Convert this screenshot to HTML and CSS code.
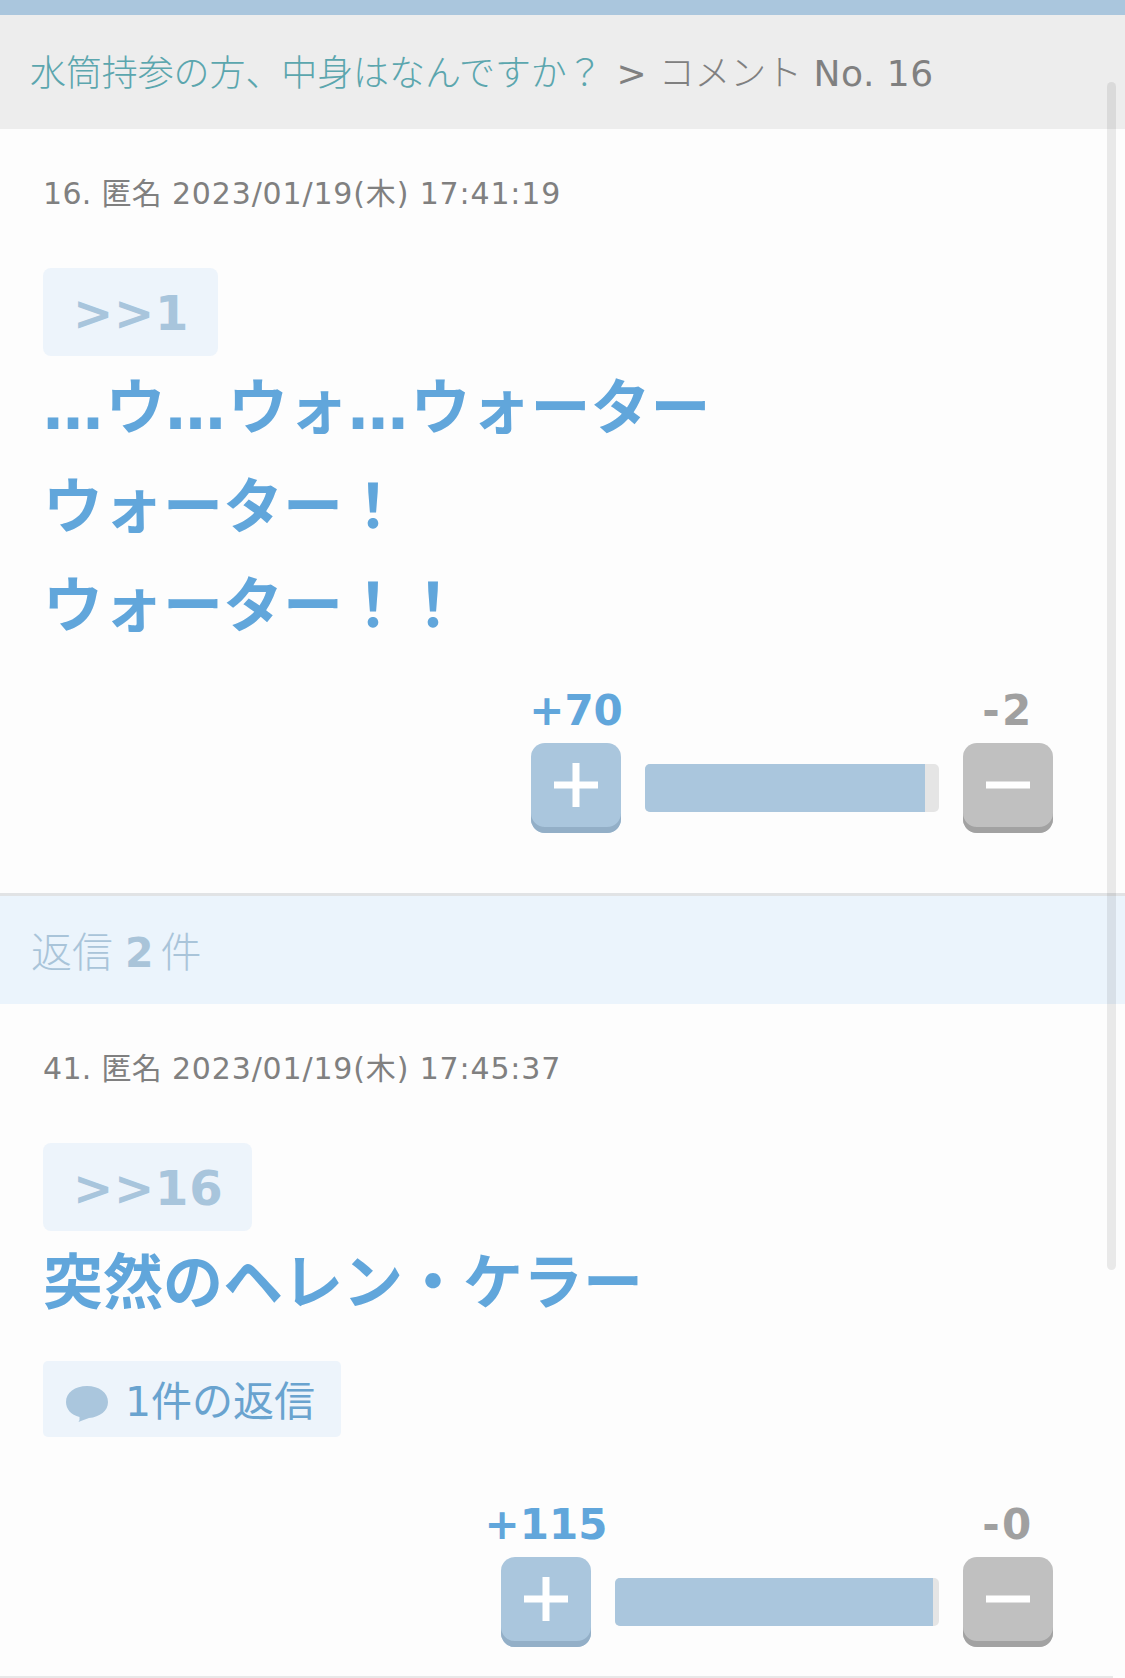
FILE: index.html
```html
<!DOCTYPE html>
<html lang="ja">
<head>
    <meta charset="UTF-8">
    <meta name="viewport" content="width=device-width, initial-scale=1.0">
    <title>水筒持参の方、中身はなんですか？</title>
    <link rel="stylesheet" href="styles.css">
</head>
<body>
    <div class="top-bar"></div>

    <nav class="breadcrumb">
        <a href="#">水筒持参の方、中身はなんですか？</a><span class="arrow">&gt;</span><span class="page">コメント</span><span class="number">No. 16</span>
    </nav>

    <main>
        <article class="comment">
            <p class="meta">16. 匿名 <span class="date">2023/01/19(木) 17:41:19</span></p>
            <a href="#" class="anchor">&gt;&gt;1</a>
            <p class="body"><span class="dots">…</span>ウ<span class="dots">…</span>ウォ<span class="dots">…</span>ウォーター<br>ウォーター！<br>ウォーター！！</p>
            <div class="votes">
                <div class="vote plus">
                    <span class="count">+70</span>
                    <button class="vote-button" aria-label="プラス">
                        <svg viewBox="0 0 44 44"><path d="M0 22H44M22 0V44"/></svg>
                    </button>
                </div>
                <div class="rate rate-short"><div class="rate-fill" style="width: 95.4%"></div></div>
                <div class="vote minus">
                    <span class="count">-2</span>
                    <button class="vote-button" aria-label="マイナス">
                        <svg viewBox="0 0 44 44"><path d="M0 22H44"/></svg>
                    </button>
                </div>
            </div>
        </article>

        <h2 class="reply-header">返信<b>2</b>件</h2>

        <article class="comment reply">
            <p class="meta">41. 匿名 <span class="date">2023/01/19(木) 17:45:37</span></p>
            <a href="#" class="anchor">&gt;&gt;16</a>
            <p class="body">突然のヘレン・ケラー</p>
            <a href="#" class="reply-link">
                <svg viewBox="0 0 42 36"><path d="M21 0C33 0 42 6.500 42 16C42 25 34 31 23 32C19.500 33 15.500 35 12.500 36Q14 33.500 13.500 31C5 29 0 23 0 16C0 6.500 9 0 21 0Z"/></svg>
                <span>1件の返信</span>
            </a>
            <div class="votes">
                <div class="vote plus">
                    <span class="count">+115</span>
                    <button class="vote-button" aria-label="プラス">
                        <svg viewBox="0 0 44 44"><path d="M0 22H44M22 0V44"/></svg>
                    </button>
                </div>
                <div class="rate rate-long"><div class="rate-fill" style="width: 98.3%"></div></div>
                <div class="vote minus">
                    <span class="count">-0</span>
                    <button class="vote-button" aria-label="マイナス">
                        <svg viewBox="0 0 44 44"><path d="M0 22H44"/></svg>
                    </button>
                </div>
            </div>
        </article>
        <hr class="divider">
    </main>

    <div class="scrollbar"></div>
</body>
</html>
```
FILE: styles.css
```css
* {
    margin: 0;
    padding: 0;
    box-sizing: border-box;
}

body {
    height: 1678px;
    position: relative;
    overflow: hidden;
    background-color: #fdfdfd;
    color: #808080;
    font-family: "DejaVu Sans", "Noto Sans CJK JP", sans-serif;
}

a {
    text-decoration: none;
}

.top-bar {
    height: 15px;
    background-color: #aac6dd;
}

/* Breadcrumb */
.breadcrumb {
    display: flex;
    align-items: baseline;
    height: 114px;
    padding: 34px 30px 0;
    background-color: #ededed;
    font-size: 36px;
    line-height: 50px;
    white-space: nowrap;
}

.breadcrumb a {
    color: #5ba6ae;
    font-weight: 300;
    letter-spacing: -0.1px;
}

.breadcrumb .arrow {
    margin: 0 12px 0 14px;
}

.breadcrumb .page {
    font-weight: 300;
    letter-spacing: -0.3px;
}

.breadcrumb .number {
    margin-left: 12px;
    letter-spacing: 0.5px;
}

/* Comments */
.comment {
    display: flex;
    flex-direction: column;
    align-items: flex-start;
    padding: 45px 72px 60px 43px;
}

.reply {
    padding-bottom: 29px;
}

.meta {
    margin-bottom: 54px;
    font-size: 30px;
    line-height: 40px;
    letter-spacing: 0.3px;
    white-space: nowrap;
}

.meta .date {
    letter-spacing: 0.85px;
}

.anchor {
    height: 88px;
    padding: 0 29px 0 30px;
    border-radius: 8px;
    background-color: #edf4fb;
    color: #a8c5dc;
    font-size: 48px;
    font-weight: bold;
    line-height: 90px;
    letter-spacing: 0.8px;
}

.body {
    padding-top: 3px;
    color: #61a6db;
    font-size: 60px;
    font-weight: bold;
    line-height: 99px;
    white-space: nowrap;
}

.body .dots {
    letter-spacing: 2.5px;
}

/* Plus / minus votes */
.votes {
    display: flex;
    align-items: flex-end;
    align-self: flex-end;
    gap: 24px;
    margin-top: 30px;
}

.vote {
    display: flex;
    flex-direction: column;
    align-items: center;
    width: 90px;
}

.count {
    margin-bottom: 7px;
    font-size: 42px;
    font-weight: bold;
    line-height: 50px;
    white-space: nowrap;
}

.plus .count {
    color: #61a6db;
}

.minus .count {
    color: #a0a0a0;
    letter-spacing: 2.5px;
}

.vote-button {
    display: flex;
    justify-content: center;
    width: 90px;
    height: 90px;
    padding-top: 20px;
    border: none;
    border-radius: 14px;
}

.plus .vote-button {
    background-color: #aac6dd;
    box-shadow: inset 0 -6px 0 #93afc7;
}

.minus .vote-button {
    background-color: #c0c0c0;
    box-shadow: inset 0 -6px 0 #a2a2a2;
}

.vote-button svg {
    width: 44px;
    height: 44px;
    stroke: #fff;
    stroke-width: 7;
}

.rate {
    height: 48px;
    margin-bottom: 21px;
    border-radius: 5px;
    background-color: #e5e5e5;
    overflow: hidden;
}

.rate-short {
    width: 294px;
}

.rate-long {
    width: 324px;
}

.rate-fill {
    height: 100%;
    background-color: #aac6dd;
}

/* Replies */
.reply-header {
    display: flex;
    align-items: baseline;
    height: 111px;
    padding: 27px 31px 0;
    border-top: 3px solid #e1e3e5;
    background-color: #ebf4fc;
    color: #a9c4d9;
    font-size: 41px;
    font-weight: 300;
    line-height: 60px;
}

.reply-header b {
    margin: 0 7px 0 12px;
    font-weight: bold;
}

.reply-link {
    display: flex;
    align-items: center;
    height: 76px;
    margin-top: 28px;
    padding: 0 26px 0 23px;
    border-radius: 5px;
    background-color: #edf4fb;
    color: #69a3cf;
    font-size: 41px;
    line-height: 76px;
}

.reply-link svg {
    width: 42px;
    height: 36px;
    margin: 10px 17px 0 0;
    fill: #aac6dd;
}

.reply-link span {
    padding-top: 6px;
}

.reply .votes {
    margin-top: 63px;
}

.divider {
    width: 1113px;
    border: none;
    border-top: 2px solid #e8e8e8;
}

.scrollbar {
    position: absolute;
    top: 82px;
    left: 1107px;
    width: 9px;
    height: 1188px;
    border-radius: 5px;
    background-color: rgba(0, 0, 0, 0.08);
}
```
